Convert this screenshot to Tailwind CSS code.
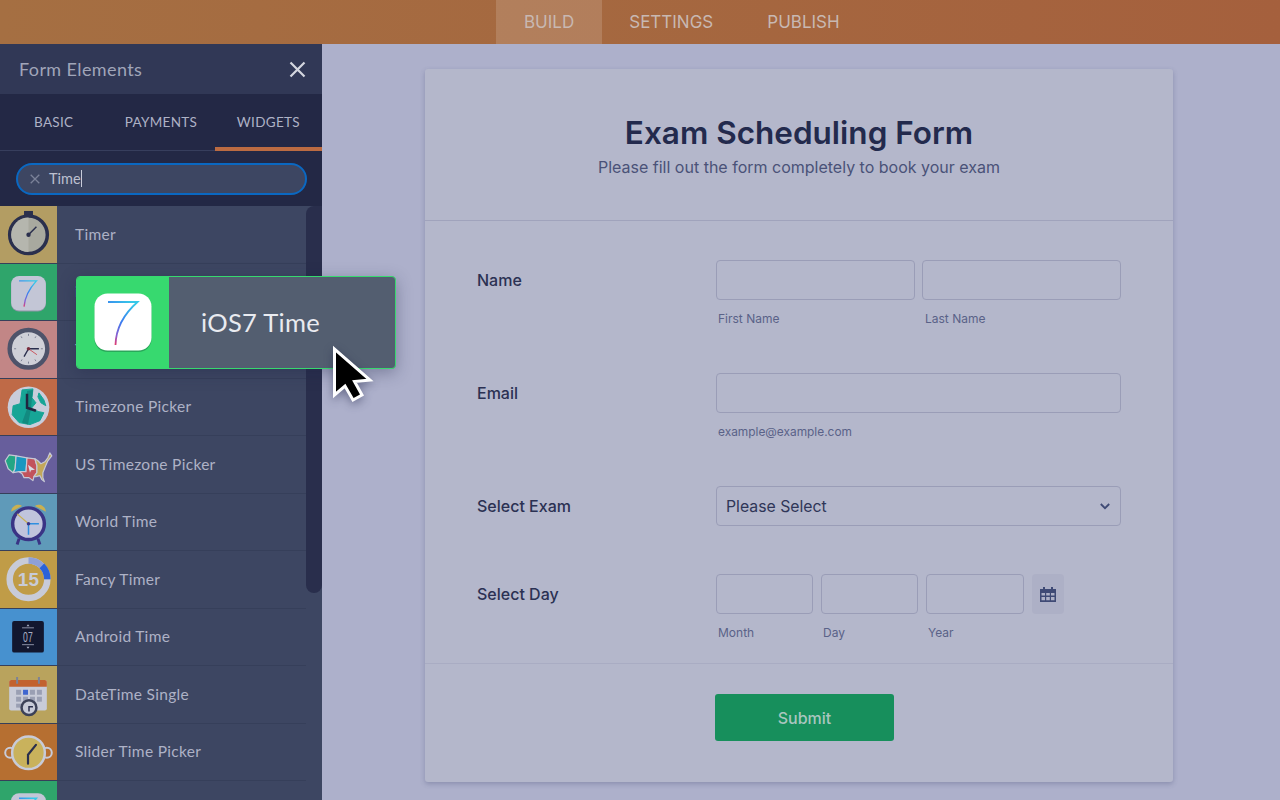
<!DOCTYPE html>
<html lang="en">
<head>
  <meta charset="UTF-8" />
  <meta name="viewport" content="width=device-width, initial-scale=1" />
  <title>Exam Scheduling Form - Build</title>
  <script src="https://cdn.jsdelivr.net/npm/@tailwindcss/browser@4"></script>
</head>
<body class="h-screen overflow-hidden bg-[#adb0cb] font-['Inter',sans-serif] flex flex-col">

  <svg class="absolute w-0 h-0">
    <defs>
      <linearGradient id="seven" x1="0.8" y1="0" x2="0.2" y2="1">
        <stop offset="0" stop-color="#35c8e8" />
        <stop offset="0.5" stop-color="#3b7cf0" />
        <stop offset="0.8" stop-color="#8a5fd0" />
        <stop offset="1" stop-color="#f0365f" />
      </linearGradient>
    </defs>
  </svg>

  <!-- Top bar -->
  <nav class="h-11 shrink-0 pl-[496px] flex bg-gradient-to-r from-[#a56f42] to-[#a5603d] text-[17px] text-[#c8b8b2]">
    <a class="px-7 pt-px flex items-center bg-white/15">BUILD</a>
    <a class="px-[27px] pt-px flex items-center">SETTINGS</a>
    <a class="px-[27px] pt-px flex items-center">PUBLISH</a>
  </nav>

  <div class="flex flex-1 min-h-0">
    <!-- Form elements panel -->
    <aside class="w-[322px] shrink-0 flex flex-col font-['Lato',sans-serif] bg-[#3d4662]">
      <div class="h-[50px] shrink-0 pl-[19px] pr-4 flex items-center justify-between bg-[#313856] text-[18px] tracking-[0.4px] text-[#a0a5b9]">
        <span>Form Elements</span>
        <svg width="17" height="17" viewBox="0 0 17 17" fill="none" stroke="#d4d6df" stroke-width="2.2"><path d="M1.5 1.5l14 14M15.5 1.5l-14 14" /></svg>
      </div>
      <div class="h-[57px] shrink-0 grid grid-cols-3 bg-[#232845] border-b border-[#373e5d] text-[13.5px] tracking-[0.3px] text-[#aeb2c6]">
        <div class="flex items-center justify-center">BASIC</div>
        <div class="flex items-center justify-center">PAYMENTS</div>
        <div class="flex items-center justify-center border-b-4 border-[#bb6b42] -mb-px pt-1">WIDGETS</div>
      </div>
      <div class="h-[55px] shrink-0 pl-4 pr-[15px] flex items-center bg-[#232845]">
        <div class="w-full h-[32px] rounded-full border-2 border-[#0a68c2] bg-[#3d4662] pl-[12px] flex items-center gap-[9px] text-[14.5px] text-[#bcc0d0]">
          <svg width="10" height="10" viewBox="0 0 10 10" fill="none" stroke="#7b8299" stroke-width="1.3"><path d="M.7.7l8.6 8.6M9.3.7L.7 9.3" /></svg>
          <span class="border-r border-[#c8ccda] leading-[17px]">Time</span>
        </div>
      </div>

      <div class="flex-1 min-h-0 flex overflow-hidden">
        <ul class="w-[306px] shrink-0 text-[15.5px] tracking-[0.3px] text-[#aeb2c6]">
          <li class="h-[57.5px] flex items-center border-b border-[#363f5a]">
            <div class="w-[57px] h-full shrink-0 bg-[#b39d63]">
              <svg viewBox="0 0 57 57" class="w-full h-full">
                <rect x="24" y="5" width="9" height="5" fill="#2a2f4d" />
                <circle cx="28.5" cy="29" r="19" fill="#a8a99f" stroke="#2a2f4d" stroke-width="3.5" />
                <path d="M28.5 11.500a17.5 17.5 0 0 0 0 35z" fill="#b5b6ae" />
                <path d="M28.5 29l8-8" stroke="#2a2f4d" stroke-width="1.5" />
                <circle cx="28.5" cy="29" r="2.2" fill="#2a2f4d" />
              </svg>
            </div>
            <span class="pl-[18px]">Timer</span>
          </li>
          <li class="h-[57.5px] flex items-center border-b border-[#363f5a]">
            <div class="w-[57px] h-full shrink-0 bg-[#2fa56b]">
              <svg viewBox="0 0 57 57" class="w-full h-full">
                <rect x="11" y="13" width="35" height="35" rx="8" fill="#8f95a8" />
                <rect x="11" y="12" width="35" height="35" rx="8" fill="#c3c6d6" />
                <path d="M19 17H36.500C30 24 25 32 24 43" fill="none" stroke="url(#seven)" stroke-width="1.400" />
              </svg>
            </div>
            <span class="pl-[18px]">iOS7 Time</span>
          </li>
          <li class="h-[57.5px] flex items-center border-b border-[#363f5a]">
            <div class="w-[57px] h-full shrink-0 bg-[#c28686]">
              <svg viewBox="0 0 57 57" class="w-full h-full">
                <circle cx="28.500" cy="28" r="19" fill="#cfd0d8" stroke="#4e536a" stroke-width="4.500" />
                <path d="M28.500 13v2M28.500 41v2M14 28h2M41 28h2M21 15.500l1 1.700M36 15.500l-1 1.700M21 40.500l1-1.700M36 40.500l-1-1.700" stroke="#6a6f85" stroke-width="0.800" />
                <path d="M28.500 28H39M28.500 28L24 36" stroke="#2a2f4d" stroke-width="1.400" />
                <path d="M28.500 28L37 34" stroke="#c9565f" stroke-width="1" />
                <circle cx="28.500" cy="28" r="1.800" fill="#7a2c3d" />
              </svg>
            </div>
            <span class="pl-[18px]">Timezone</span>
          </li>
          <li class="h-[57.5px] flex items-center border-b border-[#363f5a]">
            <div class="w-[57px] h-full shrink-0 bg-[#bf6a47]">
              <svg viewBox="0 0 57 57" class="w-full h-full">
                <circle cx="28.500" cy="28.500" r="21" fill="#c9cddb" />
                <g fill="#16a596" stroke="#16a596" stroke-width="1" stroke-linejoin="round">
                  <path d="M22 11L33 10L32 19L36 24L31 30L39 33L44 34L40 42L30 46L19 44L12 36L13 27L20 25Z" />
                  <path d="M39 14L44 21L46 27L41 24L38 18Z" />
                </g>
                <path d="M32 19L31 30L28 46L22 44L27 30L27 12L33 11Z" fill="#128a80" />
                <path d="M27 15V29L36 32" fill="none" stroke="#20253f" stroke-width="2.500" />
              </svg>
            </div>
            <span class="pl-[18px]">Timezone Picker</span>
          </li>
          <li class="h-[57.5px] flex items-center border-b border-[#363f5a]">
            <div class="w-[57px] h-full shrink-0 bg-[#675e9c]">
              <svg viewBox="0 0 57 57" class="w-full h-full">
                <g stroke="#c6c9d6" stroke-width="1.200" stroke-linejoin="round">
                  <path d="M9 19L16 20L15 33L13 37L8 33L5 25Z" fill="#23a684" />
                  <path d="M16 20L27 22L26 36L19 36L13 37L15 33Z" fill="#1897c0" />
                  <path d="M27 22L35 23L37 30L37 37L34 41L33 45L29 42L24 42L22 38L19 36L26 36Z" fill="#c2535c" />
                  <path d="M35 23L38 25L41 28L45 26L48 22L50 17L52 20L48 25L45 32L43 37L43 42L44.500 46L42 44L40 40L36 41L34 41L37 37L37 30Z" fill="#c3a75a" />
                </g>
                <path d="M28 29L35 34L31 34.500L30 37Z" fill="#d9dbe5" />
              </svg>
            </div>
            <span class="pl-[18px]">US Timezone Picker</span>
          </li>
          <li class="h-[57.5px] flex items-center border-b border-[#363f5a]">
            <div class="w-[57px] h-full shrink-0 bg-[#5f9ab9]">
              <svg viewBox="0 0 57 57" class="w-full h-full">
                <path d="M11 18C11 12 18 9 22 12ZM46 18C46 12 39 9 35 12Z" fill="#c9b052" />
                <path d="M19 45L17 51M38 45L40 51" stroke="#3a3485" stroke-width="3" />
                <circle cx="28.500" cy="30" r="16" fill="#c0c4dc" stroke="#3a3485" stroke-width="3.500" />
                <path d="M28.500 30L17 20" stroke="#c9b052" stroke-width="1.200" />
                <path d="M28.500 30H39M28.500 30V41" stroke="#2f8fe0" stroke-width="1.500" />
                <circle cx="28.500" cy="30" r="1.800" fill="#3a3485" />
              </svg>
            </div>
            <span class="pl-[18px]">World Time</span>
          </li>
          <li class="h-[57.5px] flex items-center border-b border-[#363f5a]">
            <div class="w-[57px] h-full shrink-0 bg-[#c09c47]">
              <svg viewBox="0 0 57 57" class="w-full h-full">
                <circle cx="28.500" cy="28.500" r="19" fill="none" stroke="#c8cbd8" stroke-width="6.500" />
                <path d="M28.500 9.500A19 19 0 0 1 47.500 28.500" fill="none" stroke="#8ea0d8" stroke-width="6.500" />
                <path d="M42 15A19 19 0 0 1 47.500 28.500" fill="none" stroke="#2b62d8" stroke-width="6.500" />
                <text x="28.500" y="35" text-anchor="middle" font-family="Liberation Sans" font-weight="700" font-size="19" fill="#c8cbd8">15</text>
              </svg>
            </div>
            <span class="pl-[18px]">Fancy Timer</span>
          </li>
          <li class="h-[57.5px] flex items-center border-b border-[#363f5a]">
            <div class="w-[57px] h-full shrink-0 bg-[#4791cf]">
              <svg viewBox="0 0 57 57" class="w-full h-full">
                <rect x="12" y="12" width="32" height="32" rx="2" fill="#12172f" />
                <path d="M22 19H34M22 36H34" stroke="#aab0c4" stroke-width="0.800" />
                <path d="M26.500 17.500L28 15.500L29.500 17.500ZM26.500 38L28 40L29.500 38Z" fill="#aab0c4" />
                <text x="28" y="33.500" text-anchor="middle" font-family="Liberation Sans" font-size="14" fill="#aab0c4" textLength="10" lengthAdjust="spacingAndGlyphs">07</text>
              </svg>
            </div>
            <span class="pl-[18px]">Android Time</span>
          </li>
          <li class="h-[57.5px] flex items-center border-b border-[#363f5a]">
            <div class="w-[57px] h-full shrink-0 bg-[#b9a35d]">
              <svg viewBox="0 0 57 57" class="w-full h-full">
                <rect x="9" y="14" width="38" height="31" rx="2" fill="#c8cbd8" />
                <path d="M9 21V16a2 2 0 0 1 2-2H45a2 2 0 0 1 2 2V21Z" fill="#c2622f" />
                <path d="M17 11V18M39 11V18" stroke="#7d8296" stroke-width="2" />
                <g fill="#9a9fb3">
                  <rect x="16" y="24" width="5" height="5" /><rect x="30" y="24" width="5" height="5" /><rect x="37" y="24" width="5" height="5" />
                  <rect x="16" y="31" width="5" height="5" /><rect x="23" y="31" width="5" height="5" /><rect x="30" y="31" width="5" height="5" /><rect x="37" y="31" width="5" height="5" />
                  <rect x="16" y="38" width="5" height="4" />
                </g>
                <rect x="23" y="24" width="5" height="5" fill="#3f66cf" />
                <circle cx="29" cy="42" r="7.500" fill="#c8cbd8" stroke="#3c4158" stroke-width="2.500" />
                <path d="M29 46V41H33" fill="none" stroke="#2a2f4d" stroke-width="1.500" />
              </svg>
            </div>
            <span class="pl-[18px]">DateTime Single</span>
          </li>
          <li class="h-[57.5px] flex items-center border-b border-[#363f5a]">
            <div class="w-[57px] h-full shrink-0 bg-[#b66f31]">
              <svg viewBox="0 0 57 57" class="w-full h-full">
                <circle cx="10" cy="29" r="5" fill="none" stroke="#c8cbd8" stroke-width="2" />
                <circle cx="47" cy="29" r="5" fill="none" stroke="#c8cbd8" stroke-width="2" />
                <circle cx="28.500" cy="29" r="16.500" fill="#c9b25c" stroke="#c8cbd8" stroke-width="2.500" />
                <path d="M28 31L36 21M28 31V40" stroke="#2a2f4d" stroke-width="2.200" stroke-linecap="round" />
              </svg>
            </div>
            <span class="pl-[18px]">Slider Time Picker</span>
          </li>
          <li class="h-[57.5px] flex items-center">
            <div class="w-[57px] h-full shrink-0 bg-[#2fa56b]">
              <svg viewBox="0 0 57 57" class="w-full h-full">
                <rect x="11" y="12" width="35" height="35" rx="8" fill="#c3c6d6" />
                <path d="M19 17H36.500C30 24 25 32 24 43" fill="none" stroke="url(#seven)" stroke-width="1.400" />
              </svg>
            </div>
          </li>
        </ul>
        <!-- Scrollbar -->
        <div class="w-4 shrink-0 h-full">
          <div class="h-[387px] bg-[#292e4c] rounded-b-lg rounded-tl-lg"></div>
        </div>
      </div>
    </aside>

    <!-- Form -->
    <main class="flex-1 min-w-0 pl-[103px] pt-[25px]">
      <div class="w-[748px] h-[713px] bg-[#b4b7cb] rounded-[3px] shadow-[0_2px_5px_rgba(60,65,110,0.3)] flex flex-col">
        <header class="h-[152px] shrink-0 pt-[45px] border-b border-[#a0a3bc] text-center">
          <h1 class="text-[31.5px] leading-[38px] font-semibold text-[#232a4d]">Exam Scheduling Form</h1>
          <p class="mt-[5px] text-[16px] leading-[20px] text-[#4a5278]">Please fill out the form completely to book your exam</p>
        </header>

        <div class="h-[443px] shrink-0 pt-[39px] px-[52px] border-b border-[#a9acc3] text-[#5a6288]">
          <div class="h-[113px] flex">
            <label class="w-[239px] h-10 flex items-center text-[16px] font-medium text-[#2b3153]">Name</label>
            <div class="flex-1 grid grid-cols-2 gap-[7px] content-start">
              <div>
                <div class="h-10 border border-[#9a9db7] rounded-[4px]"></div>
                <p class="mt-[11px] ml-[2px] text-[12px] leading-[16px]">First Name</p>
              </div>
              <div>
                <div class="h-10 border border-[#9a9db7] rounded-[4px]"></div>
                <p class="mt-[11px] ml-[3px] text-[12px] leading-[16px]">Last Name</p>
              </div>
            </div>
          </div>
          <div class="h-[113px] flex">
            <label class="w-[239px] h-10 flex items-center text-[16px] font-medium text-[#2b3153]">Email</label>
            <div class="flex-1">
              <div class="h-10 border border-[#9a9db7] rounded-[4px]"></div>
              <p class="mt-[11px] ml-[2px] text-[11.9px] leading-[16px]">example@example.com</p>
            </div>
          </div>
          <div class="h-[88px] flex">
            <label class="w-[239px] h-10 flex items-center text-[16px] font-medium text-[#2b3153]">Select Exam</label>
            <div class="flex-1 h-10 pl-[9px] pr-[10px] border border-[#9a9db7] rounded-[4px] flex items-center justify-between text-[15.8px] text-[#2f3658]">
              <span class="pt-px">Please Select</span>
              <svg width="10" height="7" viewBox="0 0 10 7" fill="none" stroke="#3f4a75" stroke-width="1.800"><path d="M.8 1l4.200 4.200L9.200 1" /></svg>
            </div>
          </div>
          <div class="flex">
            <label class="w-[239px] h-10 flex items-center text-[16px] font-medium text-[#2b3153]">Select Day</label>
            <div class="flex gap-2">
              <div class="w-[97px]">
                <div class="h-10 border border-[#9a9db7] rounded-[4px]"></div>
                <p class="mt-[11px] ml-[2px] text-[12px] leading-[16px]">Month</p>
              </div>
              <div class="w-[97px]">
                <div class="h-10 border border-[#9a9db7] rounded-[4px]"></div>
                <p class="mt-[11px] ml-[2px] text-[12px] leading-[16px]">Day</p>
              </div>
              <div class="w-[98px]">
                <div class="h-10 border border-[#9a9db7] rounded-[4px]"></div>
                <p class="mt-[11px] ml-[2px] text-[12px] leading-[16px]">Year</p>
              </div>
              <div class="w-8 h-10 bg-[#adb0c6] rounded-[4px] flex items-center justify-center">
                <svg width="16" height="15" viewBox="0 0 16 15" fill="#3f4a75"><path d="M3 0h2v2h6V0h2v2h3v13H0V2h3zM1.500 6v2.500h3.500V6zM6.200 6v2.500h3.600V6zM11 6v2.500h3.500V6zM1.500 10v3.200h3.500V10zM6.200 10v3.200h3.600V10zM11 10v3.200h3.500V10z" fill-rule="evenodd" /></svg>
              </div>
            </div>
          </div>
        </div>

        <div class="pt-[30px] pl-[290px]">
          <button class="w-[179px] h-[47px] bg-[#178f5c] rounded-[3px] text-[16px] font-medium text-[#a9c6bf]">Submit</button>
        </div>
      </div>
    </main>
  </div>

  <!-- Dragged widget -->
  <div class="absolute left-[76px] top-[276px] w-[320px] h-[93px] flex rounded-[4px] border border-[#37d96f] bg-[#535e70] shadow-[0_4px_16px_rgba(30,35,70,0.35)] overflow-hidden font-['Lato',sans-serif]">
    <div class="w-[92px] shrink-0 bg-[#37d96f] flex items-center justify-center">
      <svg width="58" height="60" viewBox="0 0 58 60">
        <rect x="0.500" y="2" width="57" height="57" rx="13" fill="#2aa85a" />
        <rect x="0.500" y="0.500" width="57" height="57" rx="13" fill="#fff" />
        <path d="M14 9H43.500C31 20 22 33 21.500 52" fill="none" stroke="url(#seven)" stroke-width="1.800" />
      </svg>
    </div>
    <span class="pl-[32px] flex items-center text-[25.5px] tracking-[0.3px] text-[#e9ebf0]">iOS7 Time</span>
  </div>

  <!-- Cursor -->
  <svg class="absolute left-[331px] top-[345px] drop-shadow-[0_3px_5px_rgba(30,35,70,0.45)]" width="44" height="60" viewBox="0 0 44 60">
    <path d="M3.500 4V50L14 41L22 55L31 50L23.500 36.500L39 35Z" fill="#000" stroke="#fff" stroke-width="3" stroke-linejoin="miter" />
  </svg>

</body>
</html>
